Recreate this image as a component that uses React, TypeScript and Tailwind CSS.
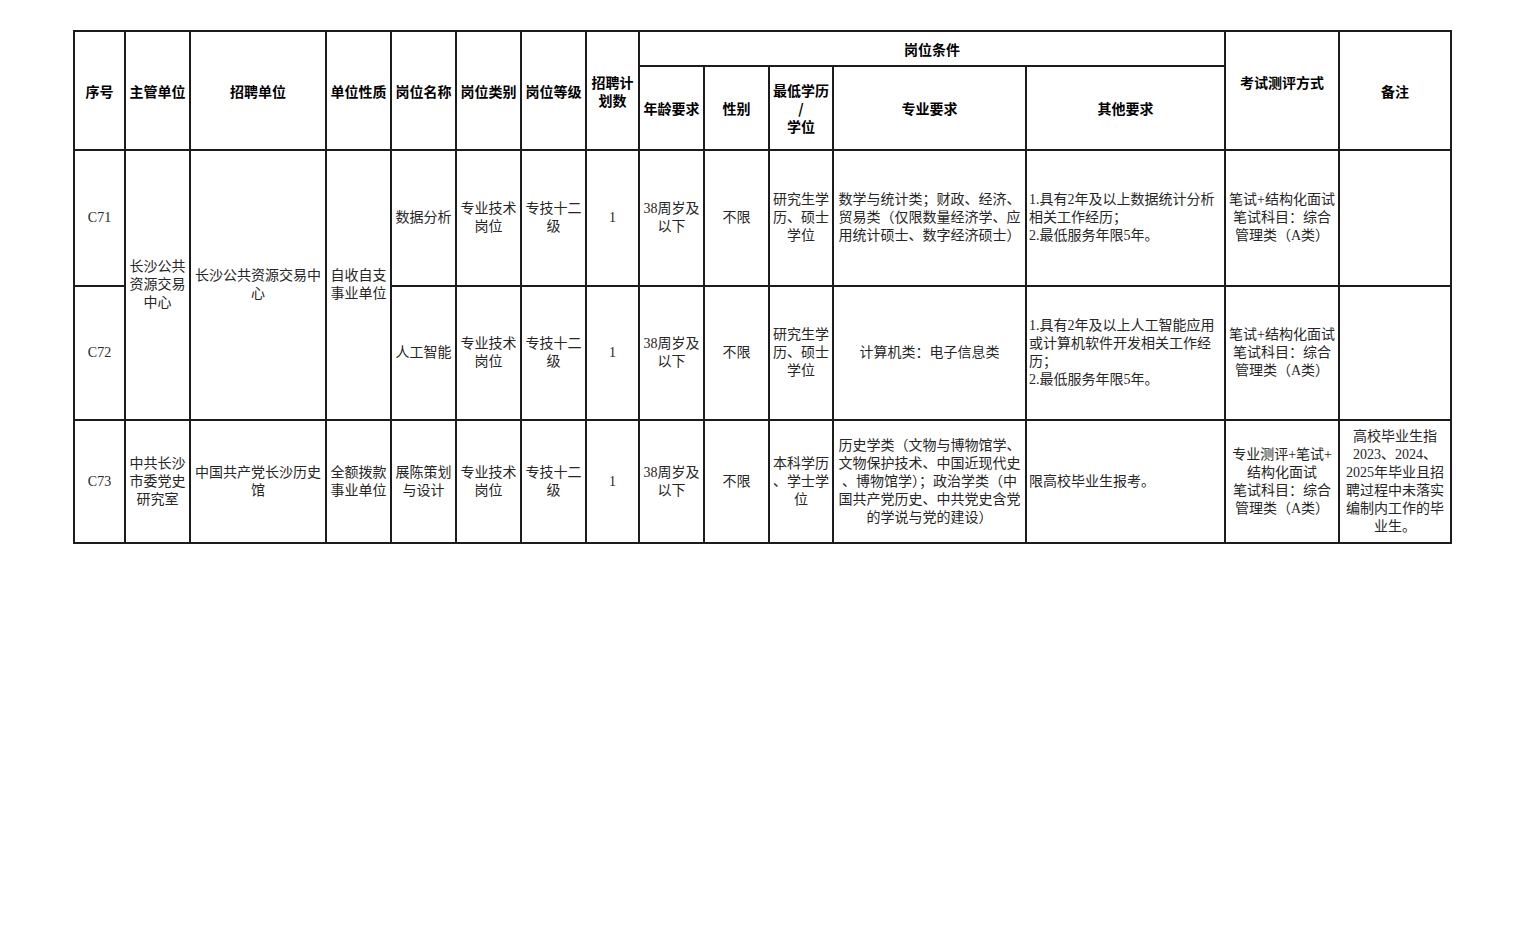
const serif = { fontFamily: '"Liberation Serif", "Noto Sans CJK SC", serif' };

const cols = [51, 65, 136, 65, 65, 65, 65, 53, 65, 65, 64, 193, 199, 114, 112];

function Lines({ lines }: { lines: string[] }) {
  return (
    <>
      {lines.map((l, i) => (
        <div key={i} className="whitespace-nowrap">
          {l}
        </div>
      ))}
    </>
  );
}

function Th({
  children,
  rowSpan,
  colSpan,
  extra = "",
}: {
  children: React.ReactNode;
  rowSpan?: number;
  colSpan?: number;
  extra?: string;
}) {
  return (
    <th
      rowSpan={rowSpan}
      colSpan={colSpan}
      className={`border-2 border-[#1c1c1c] px-[2px] text-center align-middle text-[14px] font-bold leading-[18px] text-black ${extra}`}
    >
      {children}
    </th>
  );
}

function Td({
  lines,
  rowSpan,
  align = "center",
}: {
  lines: string[];
  rowSpan?: number;
  align?: "center" | "left";
}) {
  return (
    <td
      rowSpan={rowSpan}
      className={`border-2 border-[#1c1c1c] px-[2px] align-middle text-[14px] leading-[18px] text-[#262626] ${
        align === "left" ? "text-left" : "text-center"
      }`}
      style={serif}
    >
      <Lines lines={lines} />
    </td>
  );
}

export default function App() {
  return (
    <div
      className="min-h-screen bg-white pl-[73px] pt-[30px]"
      style={{ fontFamily: '"Noto Sans CJK SC", sans-serif' }}
    >
      <table className="table-fixed border-collapse" style={{ width: 1377 }}>
        <colgroup>
          {cols.map((w, i) => (
            <col key={i} style={{ width: w }} />
          ))}
        </colgroup>
        <thead>
          <tr className="h-[35px]">
            <Th rowSpan={2}>序号</Th>
            <Th rowSpan={2}>主管单位</Th>
            <Th rowSpan={2}>招聘单位</Th>
            <Th rowSpan={2}>单位性质</Th>
            <Th rowSpan={2}>岗位名称</Th>
            <Th rowSpan={2}>岗位类别</Th>
            <Th rowSpan={2}>岗位等级</Th>
            <Th rowSpan={2}>
              <Lines lines={["招聘计", "划数"]} />
            </Th>
            <Th colSpan={5}>岗位条件</Th>
            <Th rowSpan={2} extra="pb-[18px]">
              考试测评方式
            </Th>
            <Th rowSpan={2}>备注</Th>
          </tr>
          <tr className="h-[84px]">
            <Th>年龄要求</Th>
            <Th>性别</Th>
            <Th>
              <Lines lines={["最低学历", "/", "学位"]} />
            </Th>
            <Th>专业要求</Th>
            <Th>其他要求</Th>
          </tr>
        </thead>
        <tbody>
          <tr className="h-[136px]">
            <Td lines={["C71"]} />
            <Td rowSpan={2} lines={["长沙公共", "资源交易", "中心"]} />
            <Td rowSpan={2} lines={["长沙公共资源交易中", "心"]} />
            <Td rowSpan={2} lines={["自收自支", "事业单位"]} />
            <Td lines={["数据分析"]} />
            <Td lines={["专业技术", "岗位"]} />
            <Td lines={["专技十二", "级"]} />
            <Td lines={["1"]} />
            <Td lines={["38周岁及", "以下"]} />
            <Td lines={["不限"]} />
            <Td lines={["研究生学", "历、硕士", "学位"]} />
            <Td
              lines={[
                "数学与统计类；财政、经济、",
                "贸易类（仅限数量经济学、应",
                "用统计硕士、数字经济硕士）",
              ]}
            />
            <Td
              align="left"
              lines={["1.具有2年及以上数据统计分析", "相关工作经历；", "2.最低服务年限5年。"]}
            />
            <Td lines={["笔试+结构化面试", "笔试科目：综合", "管理类（A类）"]} />
            <Td lines={[]} />
          </tr>
          <tr className="h-[134px]">
            <Td lines={["C72"]} />
            <Td lines={["人工智能"]} />
            <Td lines={["专业技术", "岗位"]} />
            <Td lines={["专技十二", "级"]} />
            <Td lines={["1"]} />
            <Td lines={["38周岁及", "以下"]} />
            <Td lines={["不限"]} />
            <Td lines={["研究生学", "历、硕士", "学位"]} />
            <Td lines={["计算机类：电子信息类"]} />
            <Td
              align="left"
              lines={[
                "1.具有2年及以上人工智能应用",
                "或计算机软件开发相关工作经",
                "历；",
                "2.最低服务年限5年。",
              ]}
            />
            <Td lines={["笔试+结构化面试", "笔试科目：综合", "管理类（A类）"]} />
            <Td lines={[]} />
          </tr>
          <tr className="h-[123px]">
            <Td lines={["C73"]} />
            <Td lines={["中共长沙", "市委党史", "研究室"]} />
            <Td lines={["中国共产党长沙历史", "馆"]} />
            <Td lines={["全额拨款", "事业单位"]} />
            <Td lines={["展陈策划", "与设计"]} />
            <Td lines={["专业技术", "岗位"]} />
            <Td lines={["专技十二", "级"]} />
            <Td lines={["1"]} />
            <Td lines={["38周岁及", "以下"]} />
            <Td lines={["不限"]} />
            <Td lines={["本科学历", "、学士学", "位"]} />
            <Td
              lines={[
                "历史学类（文物与博物馆学、",
                "文物保护技术、中国近现代史",
                "、博物馆学）；政治学类（中",
                "国共产党历史、中共党史含党",
                "的学说与党的建设）",
              ]}
            />
            <Td align="left" lines={["限高校毕业生报考。"]} />
            <Td
              lines={["专业测评+笔试+", "结构化面试", "笔试科目：综合", "管理类（A类）"]}
            />
            <Td
              lines={[
                "高校毕业生指",
                "2023、2024、",
                "2025年毕业且招",
                "聘过程中未落实",
                "编制内工作的毕",
                "业生。",
              ]}
            />
          </tr>
        </tbody>
      </table>
    </div>
  );
}
